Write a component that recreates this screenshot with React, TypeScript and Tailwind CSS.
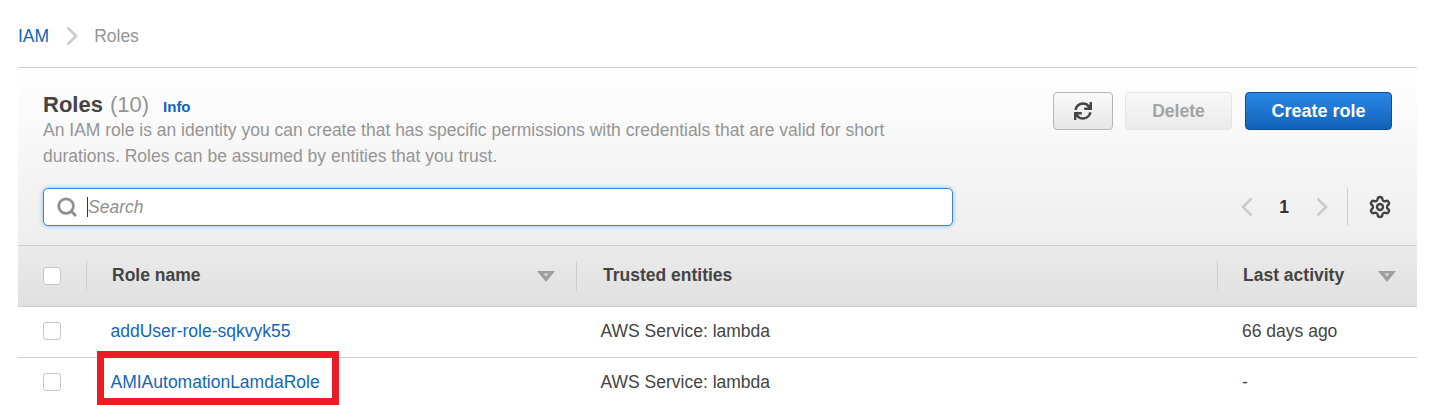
import { Search, Settings } from "lucide-react";
import { FaSync } from "react-icons/fa";

const font = "font-['Liberation_Sans',Arial,sans-serif]";

function Checkbox({ header }: { header?: boolean }) {
  return (
    <span
      className={`block h-[18px] w-[18px] rounded-[3px] border border-[#c6c6c6] bg-white ${header ? "border-[#bdbdbd]" : ""}`}
    />
  );
}

function SortCaret() {
  return (
    <svg width="18" height="12" viewBox="0 0 18 12" className="shrink-0">
      <path d="M0 1h18l-9 11z" fill="#9f9f9f" />
      <path d="M6.5 3.6h5l-2.5 3z" fill="#dedede" />
    </svg>
  );
}

function Chevron({ left }: { left?: boolean }) {
  return (
    <svg width="12" height="20" viewBox="0 0 12 20" className="shrink-0" fill="none" stroke="#cbcbcb" strokeWidth="2.6">
      <path d={left ? "M10.5 1.5 2 10l8.5 8.5" : "M1.5 1.5 10 10l-8.5 8.5"} />
    </svg>
  );
}

function Row({ name, last }: { name: string; last: string }) {
  return (
    <div className="flex h-[51px] items-center border-b border-[#d0d0d0] pb-[2px] text-[17.5px] text-[#444]">
      <div className="w-[92.5px] pl-[25px]">
        <Checkbox />
      </div>
      <a className="w-[490px] text-[#1166bb]">{name}</a>
      <div className="w-[641.5px]">AWS Service: lambda</div>
      <div>{last}</div>
    </div>
  );
}

export default function App() {
  return (
    <div className={`${font} relative h-[405px] w-full overflow-hidden bg-white pl-[18px] pr-[24px] antialiased`}>
      <nav className="flex h-[68px] items-center border-b border-[#cfcfcf] pt-[5px] text-[17.5px]">
        <a className="text-[#1166bb]">IAM</a>
        <span className="ml-[17px] mr-[16px]">
          <Chevron />
        </span>
        <span className="text-[#959595]">Roles</span>
      </nav>

      <section className="h-[178px] border-b border-[#d0d0d0] bg-gradient-to-b from-white to-[#eeeeee] px-[25px]">
        <div className="flex items-start justify-between pt-[24px]">
          <div className="w-[860px]">
            <div className="flex items-baseline leading-[26px]">
              <h1 className="text-[22px] font-bold text-[#444]">Roles</h1>
              <span className="ml-[7px] text-[22px] text-[#959595]">(10)</span>
              <a className="ml-[14px] text-[15px] font-bold text-[#1166bb]">Info</a>
            </div>
            <p className="text-[17.5px] leading-[26px] text-[#959595] [margin-top:-3px]">
              An IAM role is an identity you can create that has specific permissions with credentials that are valid for short durations. Roles can be assumed by entities that you trust.
            </p>
          </div>
          <div className="flex items-center">
            <button className="flex h-[38px] w-[60px] items-center justify-center rounded-[4px] border border-[#b5b5b5] bg-gradient-to-b from-[#fafafa] to-[#e6e6e6]">
              <FaSync className="h-[18px] w-[18px] text-[#444]" />
            </button>
            <button className="ml-[12px] h-[38px] w-[107px] rounded-[4px] border border-[#e4e4e4] bg-gradient-to-b from-[#f8f8f8] to-[#ebebeb] text-[17.5px] font-bold text-[#a3a3a3]">
              Delete
            </button>
            <button className="ml-[13px] h-[38px] w-[147px] rounded-[4px] border border-[#0d4f96] bg-gradient-to-b from-[#2a88e6] to-[#1162b8] text-[18px] font-bold text-white">
              Create role
            </button>
          </div>
        </div>

        <div className="mt-[19px] flex items-center">
          <div className="flex h-[38px] w-[910px] items-center rounded-[5px] border border-[#3b86d8] bg-white pl-[12px] shadow-[0_0_4px_rgba(59,134,216,0.55)]">
            <Search className="h-[22px] w-[22px] text-[#8f8f8f]" strokeWidth={3} />
            <span className="ml-[9px] h-[20px] w-px bg-[#333]" />
            <span className="text-[17.5px] italic text-[#8f8f8f]">Search</span>
          </div>
          <div className="ml-auto flex items-center">
            <Chevron left />
            <span className="ml-[26px] text-[17.5px] font-bold text-[#333]">1</span>
            <span className="ml-[27px]">
              <Chevron />
            </span>
            <span className="ml-[19px] h-[38px] w-px bg-[#cfcfcf]" />
            <Settings className="ml-[20px] h-[24px] w-[24px] text-[#444]" strokeWidth={2.4} />
          </div>
        </div>
      </section>

      <div className="flex h-[61px] items-center border-b border-[#d0d0d0] bg-gradient-to-b from-[#ebebeb] to-[#e0e0e0] text-[17.5px] font-bold text-[#444]">
        <div className="flex w-[69px] items-center justify-between pl-[25px]">
          <Checkbox header />
          <span className="h-[30px] w-px bg-[#cdcdcd]" />
        </div>
        <div className="flex w-[490px] items-center pl-[25px]">
          <span className="pb-[2px]">Role name</span>
          <span className="ml-auto flex items-center gap-[21px]">
            <SortCaret />
            <span className="h-[30px] w-px bg-[#cdcdcd]" />
          </span>
        </div>
        <div className="flex w-[641px] items-center pl-[26px]">
          <span className="pb-[2px]">Trusted entities</span>
          <span className="ml-auto h-[30px] w-px bg-[#cdcdcd]" />
        </div>
        <div className="flex flex-1 items-center pl-[25px] pr-[21px]">
          <span className="pb-[2px]">Last activity</span>
          <span className="ml-auto">
            <SortCaret />
          </span>
        </div>
      </div>

      <Row name="addUser-role-sqkvyk55" last="66 days ago" />
      <Row name="AMIAutomationLamdaRole" last="-" />

      <div className="absolute left-[97px] top-[351px] h-[54px] w-[242px] border-[7px] border-[#ed1c24]" />
    </div>
  );
}
